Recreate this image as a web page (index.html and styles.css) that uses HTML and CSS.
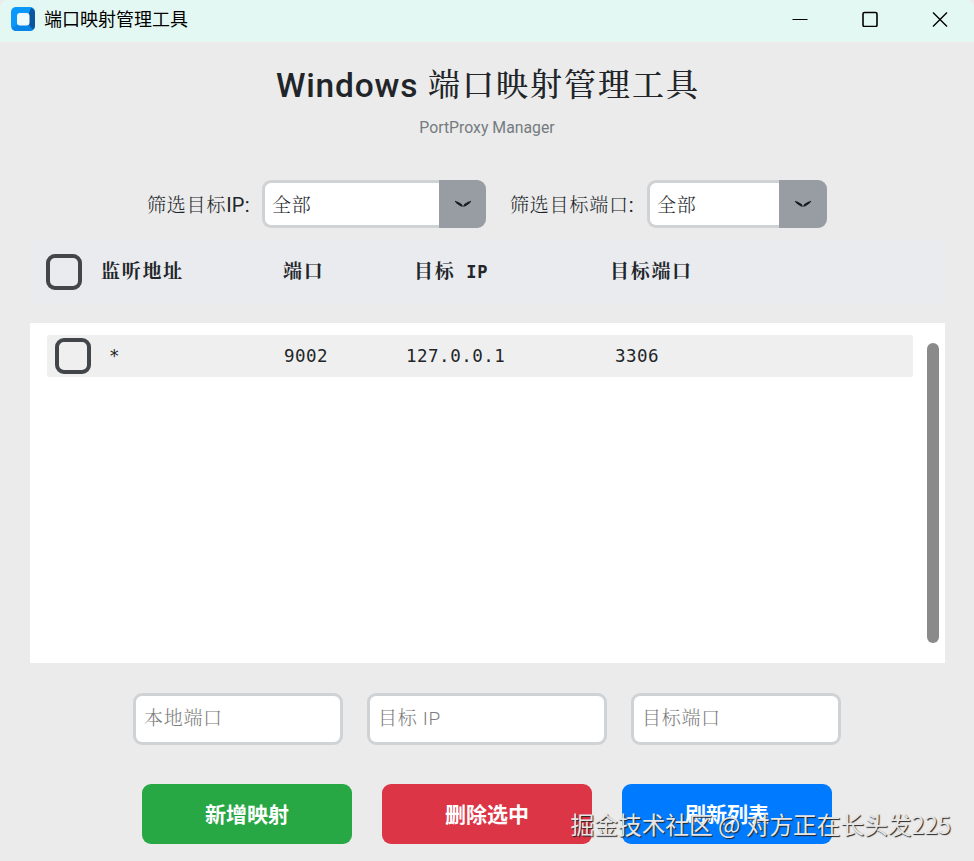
FILE: index.html
```html
<!DOCTYPE html>
<html lang="zh-CN">

  <head>
    <meta charset="UTF-8">
    <meta name="viewport" content="width=device-width, initial-scale=1.0">
    <title>端口映射管理工具</title>

    <link rel="stylesheet" href="styles.css">
  </head>

  <body>

    <div class="titlebar">
      <svg class="app__icon" width="24" height="24" viewBox="0 0 24 24">
        <rect width="24" height="24" rx="5" fill="#0a98fa"/>
        <path d="M18 6 L20 1 Q24 2 24 6 V18 Q24 22 21 23 L18 18Z" fill="#0b559e"/>
        <path d="M6 18 H18 L22 23 Q21 24 18 24 H5 Q2 24 1 21Z" fill="#0885e6"/>
        <rect x="6" y="6" width="12.5" height="12.5" rx="3" fill="#effbfa"/>
      </svg>
      <span class="titlebar__text">端口映射管理工具</span>
      <div class="titlebar__controls">
        <svg width="16" height="16" viewBox="0 0 16 16"><path d="M0.5 8.5H15.5"/></svg>
        <svg width="16" height="16" viewBox="0 0 16 16"><rect class="max" x="1" y="1.5" width="14" height="14" rx="1.5"/></svg>
        <svg width="16" height="16" viewBox="0 0 16 16"><path class="close" d="M1 1.5L15 15.5M15 1.5L1 15.5"/></svg>
      </div>
    </div>

    <header>
      <h1><span class="title__en">Windows</span><span class="title__cn">端口映射管理工具</span></h1>
      <p>PortProxy Manager</p>
    </header>

    <div class="filters">
      <label class="filter__label label--ip">筛选目标<span class="latin">IP:</span></label>
      <div class="select select--ip">
        <span>全部</span>
        <div class="select__arrow">
          <svg width="18" height="10" viewBox="0 0 18 10"><path d="M3.2 3.6L7 6M11 6L14.8 3.6"/><path class="thin" d="M1.5 2.5L7.5 7H10.5L16.5 2.5"/></svg>
        </div>
      </div>
      <label class="filter__label label--port">筛选目标端口<span class="latin">:</span></label>
      <div class="select select--port">
        <span>全部</span>
        <div class="select__arrow">
          <svg width="18" height="10" viewBox="0 0 18 10"><path d="M3.2 3.6L7 6M11 6L14.8 3.6"/><path class="thin" d="M1.5 2.5L7.5 7H10.5L16.5 2.5"/></svg>
        </div>
      </div>
    </div>

    <div class="list__head">
      <div class="checkbox"></div>
      <span>监听地址</span>
      <span>端口</span>
      <span>目标<b class="mono">&nbsp;IP</b></span>
      <span>目标端口</span>
    </div>

    <div class="list">
      <div class="row">
        <div class="checkbox"></div>
        <span class="star">*</span>
        <span>9002</span>
        <span>127.0.0.1</span>
        <span>3306</span>
      </div>
      <div class="scrollbar"></div>
    </div>

    <div class="inputs">
      <input type="text" placeholder="本地端口">
      <input type="text" class="wide" placeholder="目标 IP">
      <input type="text" placeholder="目标端口">
    </div>

    <div class="buttons">
      <button class="btn add">新增映射</button>
      <button class="btn delete">删除选中</button>
      <button class="btn refresh">刷新列表</button>
    </div>

    <div class="watermark">掘金技术社区 @ 对方正在长头发225</div>

  </body>

</html>
```
FILE: styles.css
```css
* {
  margin: 0;
  padding: 0;
  box-sizing: border-box;
}

body {
  position: relative;
  width: 974px;
  height: 861px;
  overflow: hidden;
  background-color: #ebebeb;
  color: #212529;
  font-family: Roboto, "Noto Serif CJK SC", "Noto Sans CJK SC", sans-serif;
}

.titlebar {
  display: flex;
  align-items: center;
  height: 42px;
  padding: 0 26px 4px 11px;
  background-color: #e4f8f3;
  border-radius: 8px 8px 0 0;
}

.titlebar__text {
  margin-left: 9px;
  padding-bottom: 2px;
  font: 18px/24px "Noto Sans CJK SC", sans-serif;
  color: #000;
}

.titlebar__controls {
  display: flex;
  gap: 54px;
  margin-left: auto;
}

.titlebar__controls svg {
  fill: none;
  stroke: #000;
  stroke-width: 1;
}

.titlebar__controls .max {
  stroke-width: 1.6;
}

.titlebar__controls .close {
  stroke-width: 1.4;
}

header {
  height: 138px;
  padding-top: 22px;
  text-align: center;
}

h1 {
  display: flex;
  justify-content: center;
  height: 44px;
  line-height: 43px;
  font-size: 33.5px;
  font-weight: 500;
}

.title__en {
  width: 152px;
  text-align: left;
  letter-spacing: 0.8px;
}

.title__cn {
  font-size: 32px;
  font-weight: 500;
  letter-spacing: 2px;
  margin-right: -2px;
}

header p {
  margin-top: 10px;
  font-size: 15.8px;
  line-height: 20px;
  color: #757b80;
}

.filters {
  display: flex;
  align-items: center;
  height: 48px;
  padding-left: 147px;
}

.filter__label {
  padding-bottom: 2px;
  font-size: 19px;
  font-weight: 300;
  letter-spacing: 0.8px;
  white-space: nowrap;
}

.filter__label .latin {
  font-size: 20px;
  font-weight: 400;
  letter-spacing: 0.2px;
}

.label--ip {
  width: 115px;
}

.label--port {
  width: 137px;
  margin-left: 24px;
}

.select {
  display: flex;
  align-items: center;
  justify-content: space-between;
  height: 48px;
  padding-left: 7px;
  font-size: 19px;
  font-weight: 300;
  letter-spacing: 0.8px;
  background-color: #fff;
  border: 3px solid #d0d3d5;
  border-right: 0;
  border-radius: 9px;
}

.select span {
  padding-bottom: 2px;
}

.select--ip {
  width: 224px;
}

.select--port {
  width: 180px;
}

.select__arrow {
  display: flex;
  align-items: center;
  justify-content: center;
  width: 47px;
  height: 48px;
  background-color: #979da2;
  border-radius: 0 9px 9px 0;
}

.select--port .select__arrow {
  width: 48px;
}

.select__arrow svg {
  fill: none;
  stroke: #1a1d20;
  stroke-width: 2.2;
  stroke-linecap: round;
}

.select__arrow .thin {
  stroke-width: 1.2;
}

.list__head {
  display: grid;
  grid-template-columns: 55px 182px 131px 196px 200px;
  align-items: center;
  width: 915px;
  height: 63px;
  margin: 12px 0 0 30px;
  padding-left: 16px;
  background-color: #e9ebee;
  font-size: 19px;
  font-weight: 700;
  letter-spacing: 1.7px;
}

.list__head span {
  line-height: 24px;
}

.list__head .mono {
  font-family: "DejaVu Sans Mono", monospace;
  font-size: 17px;
  letter-spacing: 0.7px;
}

.checkbox {
  width: 36px;
  height: 36px;
  border: 4px solid #424549;
  border-radius: 9px;
}

.list {
  display: flex;
  justify-content: space-between;
  width: 915px;
  height: 340px;
  margin: 20px 0 0 30px;
  padding: 12px 6px 20px 17px;
  background-color: #fff;
  border-radius: 1px;
}

.row {
  display: grid;
  grid-template-columns: 54px 175px 122px 209px 200px;
  align-items: center;
  width: 866px;
  height: 42px;
  padding-left: 8px;
  background-color: #efefef;
  border-radius: 3px;
  font-family: "DejaVu Sans Mono", monospace;
  font-size: 17.5px;
  letter-spacing: 0.5px;
  line-height: 24px;
}

.scrollbar {
  width: 12px;
  height: 300px;
  margin-top: 8px;
  background-color: #8a8a8a;
  border-radius: 6px;
}

.inputs {
  display: flex;
  justify-content: center;
  gap: 24px;
  margin-top: 30px;
}

.inputs input {
  width: 210px;
  height: 52px;
  padding: 0 8px 1px;
  background-color: #fff;
  border: 3px solid #d0d3d5;
  border-radius: 9px;
  font-family: inherit;
  font-size: 19px;
  font-weight: 300;
  letter-spacing: 0.7px;
}

.inputs .wide {
  width: 240px;
}

.inputs input::placeholder {
  color: #7d7d7d;
}

.buttons {
  display: flex;
  justify-content: center;
  gap: 30px;
  margin-top: 39px;
}

.btn {
  width: 210px;
  height: 60px;
  padding-bottom: 3px;
  border: 0;
  border-radius: 9px;
  color: #fff;
  font: bold 21px "Noto Sans CJK SC", sans-serif;
}

.add {
  background-color: #28a745;
}

.delete {
  background-color: #dc3545;
}

.refresh {
  background-color: #007bff;
}

.watermark {
  position: absolute;
  right: 23px;
  bottom: 20px;
  color: #e6e6e6;
  font: 23.7px/34px "Noto Sans CJK SC", sans-serif;
  white-space: nowrap;
  text-shadow: 1px 1px 1px #222;
}
```
